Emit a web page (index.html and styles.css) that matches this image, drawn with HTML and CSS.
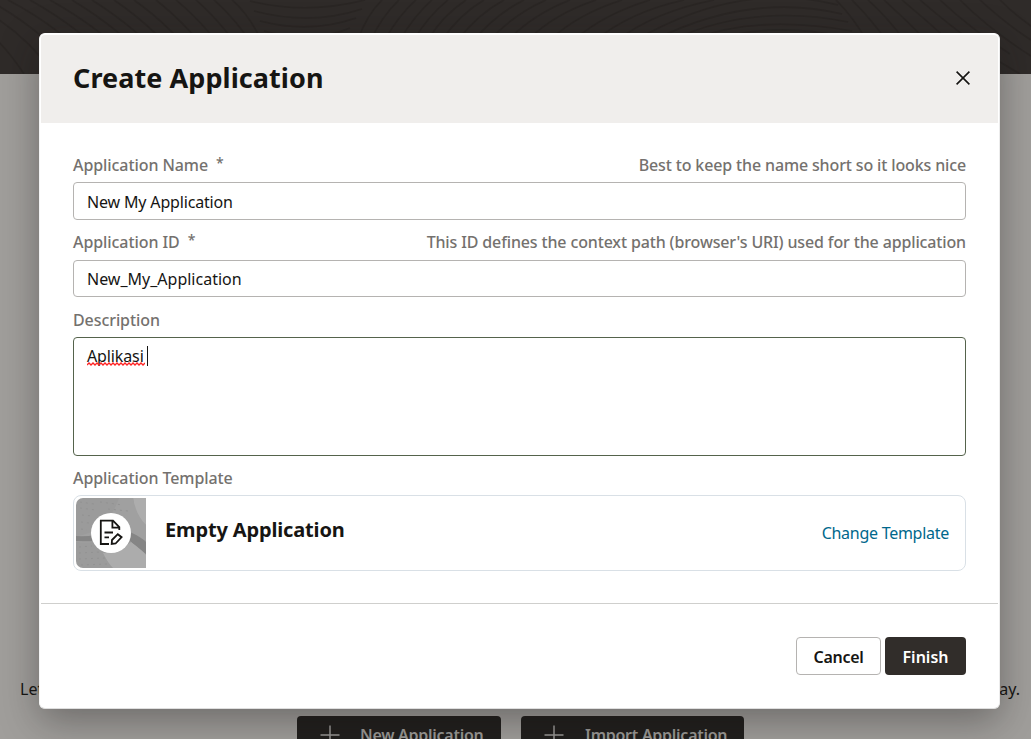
FILE: index.html
```html
<!DOCTYPE html>
<html lang="en">
<head>
<meta charset="utf-8">
<title>Create Application</title>
<link rel="stylesheet" href="styles.css">
</head>
<body>
<main class="page">
  <header class="banner">
    <svg class="waves" width="1031" height="74" viewBox="0 0 1031 74" fill="none" stroke="#2a2624" stroke-width="1.6">
      <path d="M-60 0Q-10 22 24 74M-36 0Q20 26 54 74M-12 0Q40 28 80 74M8 0Q62 28 104 74M30 0Q84 30 124 74M50 0Q104 30 146 74M72 0Q122 30 162 74M92 0Q140 30 178 74M114 0Q156 28 192 74M134 0Q174 28 208 74M156 0Q192 28 224 74M176 0Q210 28 240 74M196 0Q228 28 256 74M214 0Q244 26 270 74M232 0Q256 20 276 74"/>
      <path d="M250 1Q306 15 365 0M254 11Q310 26 362 9M260 21Q310 34 356 18M264 31Q312 44 350 28"/>
      <path d="M382 0Q366 16 358 40M399 0Q382 16 371 40M416 0Q398 16 385 40M432 0Q414 16 400 40M448 0Q428 16 414 40M466 0Q442 16 428 40M484 0Q460 14 442 40M504 0Q478 14 458 40M524 0Q496 14 474 40M546 0Q514 14 490 40M570 0Q534 14 508 40M596 0Q554 14 528 40M622 0Q578 14 550 40M650 0Q604 14 574 40M684 0Q630 12 596 40M714 0Q654 12 618 40"/>
      <path d="M636 40Q740 -20 838 5M654 40Q750 -8 842 14M672 40Q752 3 848 22M690 40Q756 14 852 31M714 40Q770 22 840 36"/>
      <path d="M836 0Q854 18 866 40M852 0Q870 18 886 40M868 0Q888 18 904 40M884 0Q906 20 926 40M902 0Q926 20 948 40M920 0Q948 24 970 40M940 0Q972 30 1010 54M960 0Q990 30 1031 56M980 0Q1006 24 1031 40M1000 0Q1014 14 1031 26M1000 62L1020 74"/>
    </svg>
  </header>
  <section class="welcome">
    <p class="intro"><span>Let's create your first application</span><span>today.</span></p>
    <div class="page-actions">
      <button class="page-button new-button" type="button"><svg width="20" height="20" viewBox="0 0 20 20"><path d="M10 .5V20M.5 10H19.5" stroke="#9b9996" stroke-width="1.5"/></svg><span>New Application</span></button>
      <button class="page-button import-button" type="button"><svg width="20" height="20" viewBox="0 0 20 20"><path d="M10 .5V20M.5 10H19.5" stroke="#9b9996" stroke-width="1.5"/></svg><span>Import Application</span></button>
    </div>
  </section>
</main>
<div class="overlay">
  <section class="dialog">
    <header class="dialog-header">
      <h1 class="dialog-title">Create Application</h1>
      <svg width="14" height="14" viewBox="0 0 14 14"><path d="M.6 .6L13.4 13.4M13.4 .6L.6 13.4" stroke="#161513" stroke-width="1.6"/></svg>
    </header>
    <div class="dialog-body">
      <div class="label-row"><span class="label">Application Name<span class="star">*</span></span><span class="label hint">Best to keep the name short so it looks nice</span></div>
      <div class="field name-field"><span class="name-value">New My Application</span></div>
      <div class="label-row"><span class="label">Application ID<span class="star">*</span></span><span class="label hint">This ID defines the context path (browser's URI) used for the application</span></div>
      <div class="field id-field"><span>New_My_Application</span></div>
      <div class="label-row"><span class="label">Description</span></div>
      <div class="field area"><span class="typed">Aplikasi<svg class="squiggle" width="58" height="4" viewBox="0 0 58 4" fill="none"><path d="M0 3L2 1L4 3L6 1L8 3L10 1L12 3L14 1L16 3L18 1L20 3L22 1L24 3L26 1L28 3L30 1L32 3L34 1L36 3L38 1L40 3L42 1L44 3L46 1L48 3L50 1L52 3L54 1L56 3L58 1" stroke="#f22" stroke-width="1.3"/></svg></span><span class="caret"></span></div>
      <div class="label-row"><span class="label">Application Template</span></div>
      <div class="template">
        <svg class="thumb" width="70" height="70" viewBox="0 0 70 70" fill="none">
          <rect width="70" height="70" fill="#9b9b9b"/>
          <path d="M57 0H70V27Q60 22 57 0Z" fill="#adadad"/>
          <path d="M0 38Q31 35 43 0H57Q60 17 70 27V43Q56 37 49 34Q30 47 0 44Z" fill="#a0a0a0"/>
          <path d="M0 38Q18 39 30 34H54Q65 39 70 44V56Q59 48 52 41Q28 44 0 43Z" fill="#858585"/>
          <path d="M27 55Q44 54 55 44Q67 53 70 57V70H37Q32 65 27 55Z" fill="#acacac"/>
          <path d="M4 4L18 6M4 10L20 12M6 17L17 18M5 24L13 25M5 31L11 32M3 49L16 48M3 55L25 54M3 61L29 60M5 67L32 66M24 4L47 7M32 11L52 13" stroke="#929292" stroke-dasharray="2 4"/>
          <circle cx="35" cy="35" r="20" fill="#fff"/>
          <path d="M43.3 32V29L37 22.7H24.8V46H33M36.4 23V29.6H43.3M28.5 34.5H37M28.5 39.3H33" stroke="#161513" stroke-width="1.8"/>
          <path d="M36 42L41.8 36.2L45.6 39.2L39.6 45.5L35.7 46Z" stroke="#161513" stroke-width="1.8"/>
        </svg>
        <h2 class="template-name">Empty Application</h2>
        <a class="change">Change Template</a>
      </div>
    </div>
    <footer class="dialog-footer">
      <button class="button cancel" type="button">Cancel</button>
      <button class="button finish" type="button">Finish</button>
    </footer>
  </section>
</div>
</body>
</html>
```
FILE: styles.css
```css
* { box-sizing: border-box; }
body { margin: 0; height: 739px; overflow: hidden; font: 16px/20px "Noto Sans", sans-serif; color: #161513; background: #a09e9b; }
h1, h2, p { margin: 0; }
svg { display: block; flex: none; }
button { font: inherit; padding: 0; }
.page { display: flex; flex-direction: column; height: 739px; overflow: hidden; }
.banner { height: 74px; flex: none; background: #2f2b29; }
.welcome { padding-top: 605px; height: 665px; flex: none; }
.intro { display: flex; justify-content: space-between; padding: 0 11px 0 20px; }
.page-actions { display: flex; gap: 20px; padding: 17px 0 0 297px; }
.page-button { display: flex; align-items: center; gap: 20px; height: 37px; border: 0; border-radius: 4px; background: #211f1d; color: #9b9996; font-weight: 600; letter-spacing: -.27px; white-space: nowrap; padding-left: 23px; }
.new-button { width: 204px; }
.import-button { width: 223px; gap: 21px; }
.overlay { position: absolute; inset: 0; padding: 33px 31px 0 39px; }
.dialog { height: 676px; padding: 1px; display: flex; flex-direction: column; border: 1px solid; border-color: #fff #ececec #dedede #f4f4f4; border-radius: 6px; background: #fff; overflow: hidden; box-shadow: 0 12px 38px rgba(20, 16, 16, .36); }
.dialog-header { height: 88px; flex: none; padding: 0 28px 2px 32px; display: flex; justify-content: space-between; align-items: center; background: #f0eeec; border-radius: 4px 4px 0 0; }
.dialog-title { font-size: 27px; line-height: 34px; font-weight: 700; letter-spacing: .07px; }
.dialog-body { height: 480px; flex: none; padding: 32px 32px 0; }
.label-row { display: flex; justify-content: space-between; height: 20px; white-space: nowrap; }
.label { color: #74716e; font-weight: 500; letter-spacing: -.08px; }
.hint { letter-spacing: -.14px; }
.star { display: inline-block; margin-left: 8px; font-size: 14px; line-height: 16px; vertical-align: 3px; }
.field { border: 1px solid #b5b3b1; border-radius: 4px; background: #fff; padding: 9px 13px; white-space: nowrap; }
.name-field { height: 38px; margin: 7px 0 12px; }
.name-value { letter-spacing: -.16px; }
.id-field { height: 37px; margin: 8px 0 13px; padding-top: 8px; }
.area { height: 119px; margin: 7px 0 12px; padding-top: 8px; display: flex; align-items: flex-start; border-color: #55634c; }
.typed { position: relative; letter-spacing: -.12px; }
.squiggle { position: absolute; left: 0; top: 16px; }
.caret { width: 1px; height: 20px; margin-left: 3px; background: #161513; }
.template { display: flex; align-items: center; height: 76px; margin-top: 7px; padding: 0 16px 0 2px; border: 1px solid #d9e0e6; border-radius: 8px; }
.thumb { border-radius: 7px 0 0 7px; }
.template-name { margin: -6px auto 0 19px; font-size: 20px; line-height: 28px; font-weight: 700; letter-spacing: -.15px; white-space: nowrap; }
.change { color: #00688c; letter-spacing: -.27px; }
.dialog-footer { display: flex; justify-content: flex-end; gap: 4px; flex: 1; padding: 33px 32px 0; border-top: 1px solid #cfcfcd; }
.button { height: 38px; padding-top: 2px; border-radius: 4px; font-weight: 600; }
.cancel { width: 85px; border: 1px solid #b5b3b1; background: #fff; color: #161513; letter-spacing: -.3px; }
.finish { width: 81px; border: 0; background: #312d2a; color: #fff; }
```
